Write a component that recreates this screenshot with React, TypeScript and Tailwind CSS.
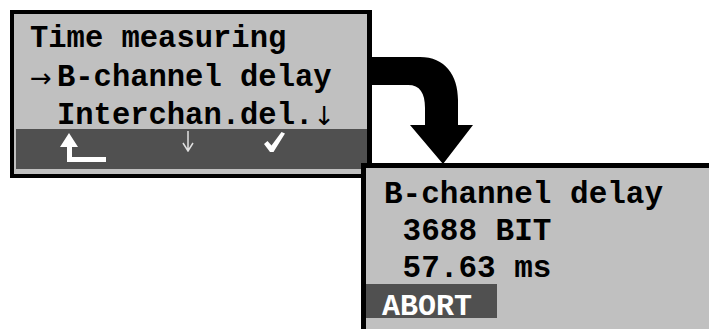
import React from 'react'

// 表示パネル（LCD風）の共通スタイル
const mono = "font-['Liberation_Mono','Courier_New',monospace] font-bold text-black"
const sym = "font-['DejaVu_Sans',sans-serif] font-normal"

function ReturnIcon() {
  return (
    <svg width="46" height="29" viewBox="0 0 46 29" className="block">
      <path d="M9 0 L18 14 L12 14 L12 24 L46 24 L46 29 L7 29 L7 14 L0 14 Z" fill="#fff" />
    </svg>
  )
}

function DownIcon() {
  return (
    <svg width="12" height="21" viewBox="0 0 12 21" className="block">
      <path d="M6 0 L6 20 M1 12 L6 20 L11 12" stroke="#e0e0e0" strokeWidth="1.5" fill="none" />
    </svg>
  )
}

function CheckIcon() {
  return (
    <svg width="21" height="20" viewBox="0 0 21 20" className="block">
      <path d="M0 12 L3.5 9 L7.5 13.5 L17.5 0 L21 1.5 L9.5 20 L6 20 Z" fill="#fff" />
    </svg>
  )
}

function MenuPanel() {
  return (
    <div className="ml-[10px] mt-[10px] flex h-[168px] w-[362px] flex-col border-[4px] border-r-[5px] border-black bg-[#c0c0c0]">
      <div className={`h-[115px] pl-[16px] pt-[6px] text-[30.5px] leading-[38.5px] whitespace-pre ${mono}`}>
        <div>Time measuring</div>
        <div className="flex">
          <span className={`inline-block w-[27px] ${sym} text-[26px]`}>→</span>
          <span>B-channel delay</span>
        </div>
        <div className="flex pt-[6px] leading-[26px]">
          <span className="inline-block w-[27px]" />
          <span>Interchan.del.</span>
          <span className={`${sym} text-[26px]`}>↓</span>
        </div>
      </div>
      <div className="ml-[2px] flex h-[40px] items-start bg-[#505050]">
        <div className="ml-[44px] mt-[4px]">
          <ReturnIcon />
        </div>
        <div className="ml-[76px] mt-[2px]">
          <DownIcon />
        </div>
        <div className="ml-[70px] mt-[3px]">
          <CheckIcon />
        </div>
      </div>
    </div>
  )
}

function ResultPanel() {
  return (
    <div className="relative z-10 ml-[361px] mt-[-15px] h-[180px] w-[360px] border-[5px] border-black bg-[#c0c0c0]">
      <div className={`h-[116px] pl-[18px] pt-[7.5px] text-[31px] leading-[37px] whitespace-pre ${mono}`}>
        <div>B-channel delay</div>
        <div> 3688 BIT</div>
        <div> 57.63 ms</div>
      </div>
      <div className={`h-[34px] w-[131px] bg-[#505050] pl-[16px] pt-[8px] text-[30px] leading-[30px] ${mono} text-white`}>
        ABORT
      </div>
    </div>
  )
}

function BendArrow() {
  return (
    <svg width="709" height="329" className="pointer-events-none absolute inset-0 z-20">
      <path
        d="M372 57 L420 57 C445 57 458 75 458 100 L458 125 L473 125 L443 164 L410 125 L425 125 L425 108 C425 93 420 85 408 85 L372 85 Z"
        fill="#000"
      />
    </svg>
  )
}

export default function App() {
  return (
    <div className="relative h-[329px] w-[709px] overflow-hidden bg-white">
      <MenuPanel />
      <ResultPanel />
      <BendArrow />
    </div>
  )
}
